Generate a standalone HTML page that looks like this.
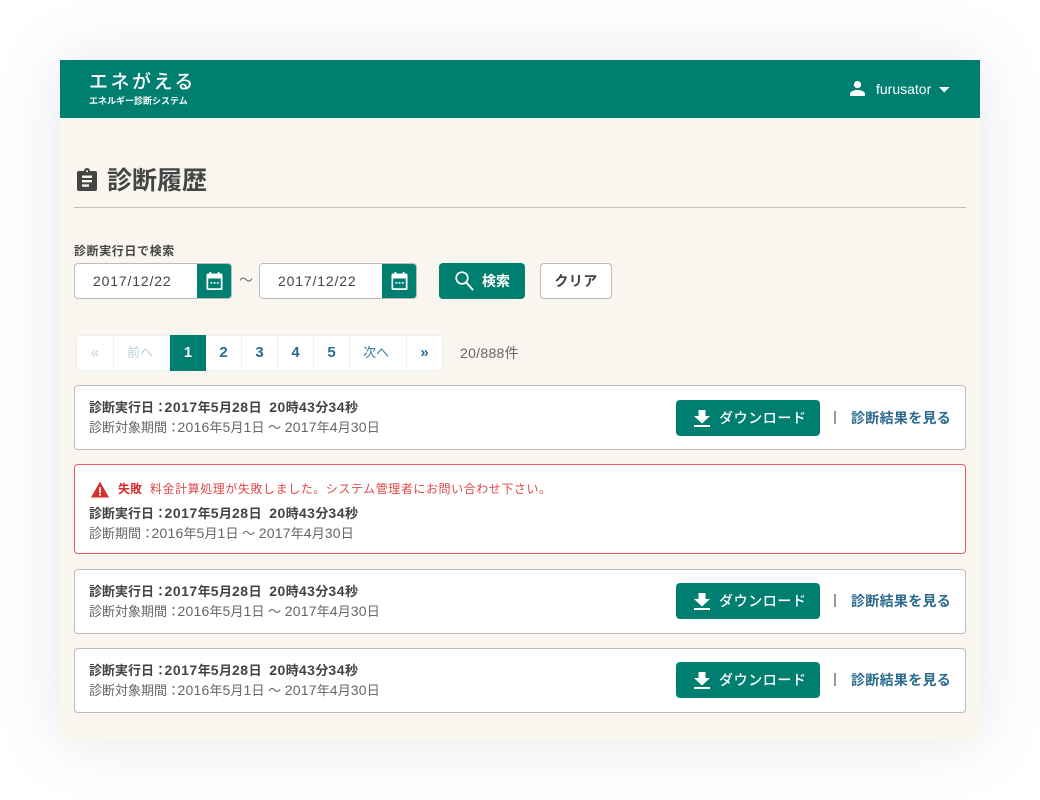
<!DOCTYPE html>
<html lang="ja">
<head>
<meta charset="utf-8">
<title>診断履歴</title>
<style>
*{box-sizing:border-box}
html,body{margin:0;padding:0}
body{width:1040px;height:800px;background:#fff;position:relative;overflow:hidden;font-family:"Liberation Sans","Noto Sans CJK JP",sans-serif;color:#444}
.a{position:absolute;white-space:nowrap}
#app{left:60px;top:60px;width:920px;height:680px;background:#f9f6f0;box-shadow:0 0 60px rgba(110,125,150,.2)}
#hd{left:60px;top:60px;width:920px;height:58px;background:#007f70;color:#fff}
.card{position:absolute;left:74px;width:892px;background:#fff;border:1px solid #bbb;border-radius:4px}
.b{font-size:13px;font-weight:700;color:#444;line-height:18px;word-spacing:4px}
.s{font-size:13px;color:#666;line-height:18px}
.b u,.s u{text-decoration:none;font-size:14px;letter-spacing:.5px}
.s u{letter-spacing:.2px}
.b em,.s em{font-style:normal;margin-right:-2.5px}
.dl{position:absolute;left:601px;top:14px;width:144px;height:36px;background:#007f70;border-radius:4px;color:#fff;font-size:14px;font-weight:500;line-height:36px}
.dl span{position:absolute;left:43px;letter-spacing:.6px}
.dl svg{position:absolute;left:16px;top:8px}
.sep{position:absolute;left:759px;top:25px;width:2px;height:13px;background:#999}
.lnk{position:absolute;left:776px;top:22px;font-size:14px;font-weight:700;color:#2a6b8f;line-height:20px;white-space:nowrap;letter-spacing:.3px}
.up .dl{top:13px}.up .sep{top:24px}.up .lnk{top:21px}
.inp{position:absolute;top:263px;width:158px;height:36px;background:#fff;border:1px solid #bbb;border-radius:4px;font-size:14px;line-height:34px;color:#444;letter-spacing:.85px;overflow:hidden}
.inp b{font-weight:400;position:absolute;left:18px}
.inp i{position:absolute;right:0;top:0;width:34px;height:34px;background:#007f70}
.inp svg{position:absolute;left:8px;top:7px}
.pg{position:absolute;top:335px;height:36px;background:#fff;border:1px solid #efefef;border-left:0;text-align:center;line-height:34px;font-size:15px;color:#2a6b8f;font-weight:700}
.pl{font-weight:400;font-size:13px}
</style>
</head>
<body>
<div class="a" id="app"></div>
<div class="a" id="hd"></div>

<div class="a" style="left:89px;top:71px;font-size:19px;line-height:24px;color:#fff;letter-spacing:2.5px;font-weight:500">エネがえる</div>
<div class="a" style="left:89px;top:95px;font-size:9px;line-height:13px;color:#fff;font-weight:700;letter-spacing:0">エネルギー診断システム</div>

<svg class="a" style="left:849px;top:80px" width="17" height="17" viewBox="0 0 17 17"><circle cx="8.5" cy="4.6" r="3.6" fill="#fff"/><path d="M1 16v-2c0-2.8 4.5-4 7.500-4s7.500 1.200 7.500 4v2z" fill="#fff"/></svg>
<div class="a" style="left:876px;top:81px;font-size:14px;line-height:17px;color:#fff">furusator</div>
<svg class="a" style="left:939px;top:87px" width="11" height="6" viewBox="0 0 11 6"><path d="M0 0h10.500L5.200 5.500z" fill="#fff"/></svg>

<svg class="a" style="left:76px;top:168px" width="22" height="24" viewBox="0 0 22 24"><path fill-rule="evenodd" fill="#444" d="M3 3h5a3 3 0 0 1 6 0h5a2 2 0 0 1 2 2v16a2 2 0 0 1-2 2H3a2 2 0 0 1-2-2V5a2 2 0 0 1 2-2zM11 2.200a1 1 0 1 0 0 2 1 1 0 0 0 0-2zM6 7.500V10h10V7.500zM6 12v2.400h10V12zM6 16.400v2.400h7v-2.400z"/></svg>
<div class="a" style="left:107px;top:164px;font-size:25px;line-height:34px;font-weight:700;color:#444">診断履歴</div>
<div class="a" style="left:74px;top:207px;width:892px;height:1px;background:#c4c1bb"></div>

<div class="a" style="left:74px;top:243px;font-size:12px;line-height:16px;font-weight:700;color:#444;letter-spacing:.6px">診断実行日で検索</div>

<div class="inp" style="left:74px"><b>2017/12/22</b><i><svg width="19" height="20" viewBox="0 0 19 20"><path fill="#fff" fill-rule="evenodd" d="M3 2.500h1.500V1h1.700v1.500h6.600V1h1.700v1.500H16a1.500 1.500 0 0 1 1.500 1.500v13.500A1.500 1.500 0 0 1 16 19H3a1.500 1.500 0 0 1-1.500-1.500V4A1.500 1.500 0 0 1 3 2.500zM3.200 7.500v9.800h12.600V7.500z"/><rect x="5.500" y="11" width="1.700" height="1.700" fill="#fff"/><rect x="8.700" y="11" width="1.700" height="1.700" fill="#fff"/><rect x="11.900" y="11" width="1.700" height="1.700" fill="#fff"/></svg></i></div>
<div class="a" style="left:239px;top:270px;font-size:14px;line-height:20px;color:#777">〜</div>
<div class="inp" style="left:259px"><b>2017/12/22</b><i><svg width="19" height="20" viewBox="0 0 19 20"><path fill="#fff" fill-rule="evenodd" d="M3 2.500h1.500V1h1.700v1.500h6.600V1h1.700v1.500H16a1.500 1.500 0 0 1 1.500 1.500v13.500A1.500 1.500 0 0 1 16 19H3a1.500 1.500 0 0 1-1.500-1.500V4A1.500 1.500 0 0 1 3 2.500zM3.200 7.500v9.800h12.600V7.500z"/><rect x="5.500" y="11" width="1.700" height="1.700" fill="#fff"/><rect x="8.700" y="11" width="1.700" height="1.700" fill="#fff"/><rect x="11.900" y="11" width="1.700" height="1.700" fill="#fff"/></svg></i></div>

<div class="a" style="left:439px;top:263px;width:86px;height:36px;background:#007f70;border-radius:4px"></div>
<svg class="a" style="left:454px;top:270px" width="20" height="21" viewBox="0 0 20 21"><circle cx="8" cy="8" r="5.800" fill="none" stroke="#fff" stroke-width="1.700"/><path d="M12.300 12.500L18.500 19.500" stroke="#fff" stroke-width="1.900" fill="none" stroke-linecap="round"/></svg>
<div class="a" style="left:482px;top:271px;font-size:14px;line-height:20px;font-weight:700;color:#fff">検索</div>
<div class="a" style="left:540px;top:263px;width:72px;height:36px;background:#fff;border:1px solid #bbb;border-radius:4px;text-align:center;font-size:14px;line-height:34px;font-weight:700;color:#444;letter-spacing:.4px">クリア</div>

<div class="pg" style="left:76px;width:38px;border-left:1px solid #efefef;border-radius:4px 0 0 4px;color:#bcd3e0;font-weight:400">«</div>
<div class="pg pl" style="left:114px;width:56px;color:#bcd3e0;padding-right:3px">前へ</div>
<div class="pg" style="left:170px;width:36px;background:#007f70;border:0;color:#fff;line-height:36px">1</div>
<div class="pg" style="left:206px;width:36px">2</div>
<div class="pg" style="left:242px;width:36px">3</div>
<div class="pg" style="left:278px;width:36px">4</div>
<div class="pg" style="left:314px;width:36px">5</div>
<div class="pg pl" style="left:350px;width:57px;color:#3d7ba0;padding-right:4px">次へ</div>
<div class="pg" style="left:407px;width:36px;border-radius:0 4px 4px 0">»</div>
<div class="a" style="left:460px;top:344px;font-size:14px;line-height:18px;color:#666;letter-spacing:.3px">20/888件</div>

<div class="card" style="top:385px;height:65px">
<div class="a b" style="left:14px;top:12px">診断実行日<em>：</em><u>2017</u>年<u>5</u>月<u>28</u>日 <u>20</u>時<u>43</u>分<u>34</u>秒</div>
<div class="a s" style="left:14px;top:32px">診断対象期間<em>：</em><u>2016</u>年<u>5</u>月<u>1</u>日 〜 <u>2017</u>年<u>4</u>月<u>30</u>日</div>
<div class="dl"><svg width="20" height="20" viewBox="0 0 20 20"><path fill="#fff" d="M6.500 2h7v6H18l-8 7.500L2 8h4.500zM2 17h16v2H2z"/></svg><span>ダウンロード</span></div><div class="sep"></div><div class="lnk">診断結果を見る</div>
</div>

<div class="card" style="top:464px;height:90px;border-color:#e25c5c">
<svg class="a" style="left:16px;top:16px" width="18" height="17" viewBox="0 0 19 17"><path fill="#d32f2f" fill-rule="evenodd" d="M9.500 0L19 17H0zM8.600 6v6h1.800V6zM8.600 13v2h1.800v-2z"/></svg>
<div class="a" style="left:43px;top:15px;font-size:12px;line-height:18px;font-weight:700;color:#d32f2f">失敗</div>
<div class="a" style="left:75px;top:15px;font-size:12px;line-height:18px;color:#e04848;letter-spacing:.56px">料金計算処理が失敗しました。システム管理者にお問い合わせ下さい。</div>
<div class="a b" style="left:14px;top:39px">診断実行日<em>：</em><u>2017</u>年<u>5</u>月<u>28</u>日 <u>20</u>時<u>43</u>分<u>34</u>秒</div>
<div class="a s" style="left:14px;top:59px">診断期間<em>：</em><u>2016</u>年<u>5</u>月<u>1</u>日 〜 <u>2017</u>年<u>4</u>月<u>30</u>日</div>
</div>

<div class="card up" style="top:569px;height:65px">
<div class="a b" style="left:14px;top:12px">診断実行日<em>：</em><u>2017</u>年<u>5</u>月<u>28</u>日 <u>20</u>時<u>43</u>分<u>34</u>秒</div>
<div class="a s" style="left:14px;top:32px">診断対象期間<em>：</em><u>2016</u>年<u>5</u>月<u>1</u>日 〜 <u>2017</u>年<u>4</u>月<u>30</u>日</div>
<div class="dl"><svg width="20" height="20" viewBox="0 0 20 20"><path fill="#fff" d="M6.500 2h7v6H18l-8 7.500L2 8h4.500zM2 17h16v2H2z"/></svg><span>ダウンロード</span></div><div class="sep"></div><div class="lnk">診断結果を見る</div>
</div>

<div class="card up" style="top:648px;height:65px">
<div class="a b" style="left:14px;top:12px">診断実行日<em>：</em><u>2017</u>年<u>5</u>月<u>28</u>日 <u>20</u>時<u>43</u>分<u>34</u>秒</div>
<div class="a s" style="left:14px;top:32px">診断対象期間<em>：</em><u>2016</u>年<u>5</u>月<u>1</u>日 〜 <u>2017</u>年<u>4</u>月<u>30</u>日</div>
<div class="dl"><svg width="20" height="20" viewBox="0 0 20 20"><path fill="#fff" d="M6.500 2h7v6H18l-8 7.500L2 8h4.500zM2 17h16v2H2z"/></svg><span>ダウンロード</span></div><div class="sep"></div><div class="lnk">診断結果を見る</div>
</div>
</body>
</html>
